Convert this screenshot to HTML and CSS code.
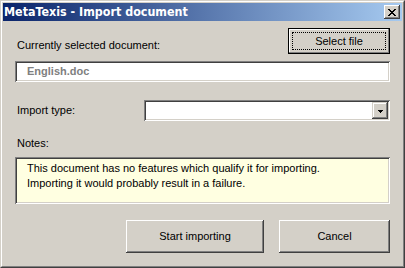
FILE: index.html
```html
<!DOCTYPE html>
<html>
<head>
<meta charset="utf-8">
<link rel="stylesheet" href="styles.css">
</head>
<body>
<div class="window">
  <div class="frame">
    <div class="titlebar">
      <span class="title">MetaTexis - Import document</span>
      <div class="close">
        <svg width="8" height="7" viewBox="0 0 8 7" shape-rendering="crispEdges">
          <path d="M0 0h2v1h-2zM6 0h2v1h-2zM1 1h2v1h-2zM5 1h2v1h-2zM2 2h4v1h-4zM3 3h2v1h-2zM2 4h4v1h-4zM1 5h2v1h-2zM5 5h2v1h-2zM0 6h2v1h-2zM6 6h2v1h-2z" fill="#000"/>
        </svg>
      </div>
    </div>
    <div class="content">
      <div class="row-top">
        <span class="label">Currently selected document:</span>
        <div class="btn btn-default"><span class="focus">Select file</span></div>
      </div>
      <div class="field">English.doc</div>
      <div class="row-combo">
        <span class="label label-fixed">Import type:</span>
        <div class="combo">
          <div class="combo-value"></div>
          <div class="combo-btn">
            <svg width="5" height="3" viewBox="0 0 5 3" shape-rendering="crispEdges"><path d="M0 0h5v1h-5zM1 1h3v1h-3zM2 2h1v1h-1z" fill="#000"/></svg>
          </div>
        </div>
      </div>
      <div class="label notes-label">Notes:</div>
      <div class="notes">This document has no features which qualify it for importing.<br>Importing it would probably result in a failure.</div>
      <div class="actions">
        <div class="btn btn-start">Start importing</div>
        <div class="btn btn-cancel">Cancel</div>
      </div>
    </div>
  </div>
</div>
</body>
</html>
```
FILE: styles.css
```css
html, body {
  margin: 0;
  padding: 0;
  background: #d4d0c8;
}
body {
  font-family: "Liberation Sans", Arial, sans-serif;
  font-size: 11px;
  color: #000;
}
.window {
  width: 405px;
  height: 268px;
  box-sizing: border-box;
  background: #d4d0c8;
  border: 1px solid;
  border-color: #d4d0c8 #404040 #404040 #d4d0c8;
}
.frame {
  height: 100%;
  box-sizing: border-box;
  border: 1px solid;
  border-color: #fff #808080 #808080 #fff;
  padding: 1px;
  display: flex;
  flex-direction: column;
}
.titlebar {
  height: 18px;
  background: linear-gradient(to right, #0a246a, #a6caf0);
  display: flex;
  align-items: center;
  justify-content: space-between;
  padding: 0 1px 0 1px;
}
.title {
  color: #fff;
  font-weight: bold;
  font-size: 12.4px;
  line-height: 18px;
  font-family: "DejaVu Sans Condensed", "DejaVu Sans", sans-serif;
}
.close {
  width: 16px;
  height: 14px;
  box-sizing: border-box;
  background: #d4d0c8;
  box-shadow: inset -1px -1px #404040, inset 1px 1px #fff, inset -2px -2px #808080;
  display: flex;
  align-items: center;
  justify-content: center;
  margin-right: 1px;
}
.close svg { display: block; margin-left: -1px; }
.content {
  flex: 1;
  padding: 7px 12px 0 12px;
  display: flex;
  flex-direction: column;
}
.label {
  line-height: 13px;
  padding-left: 2px;
}
.row-top {
  height: 26px;
  display: flex;
  justify-content: space-between;
  align-items: flex-end;
}
.row-top .label { margin-bottom: 2px; }
.btn {
  box-sizing: border-box;
  background: #d4d0c8;
  box-shadow: inset -1px -1px #404040, inset 1px 1px #fff, inset -2px -2px #808080;
  display: flex;
  align-items: center;
  justify-content: center;
  line-height: 13px;
}
.btn-default {
  width: 102px;
  height: 26px;
  border: 1px solid #000;
  padding: 3px;
  box-shadow: inset -1px -1px #808080, inset 1px 1px #fff;
  align-self: flex-start;
}
.focus {
  flex: 1;
  align-self: stretch;
  border: 1px dotted #000;
  display: flex;
  align-items: center;
  justify-content: center;
}
.field {
  margin-top: 7px;
  height: 21px;
  box-sizing: border-box;
  background: #fff;
  box-shadow: inset 1px 1px #808080, inset -1px -1px #fff, inset 2px 2px #404040, inset -2px -2px #d4d0c8;
  padding-left: 12px;
  line-height: 21px;
  font-weight: bold;
  color: #808080;
}
.row-combo {
  margin-top: 18px;
  height: 21px;
  display: flex;
  align-items: center;
}
.label-fixed {
  width: 127px;
  flex: none;
}
.combo {
  flex: 1;
  height: 21px;
  box-sizing: border-box;
  background: #fff;
  box-shadow: inset 1px 1px #808080, inset -1px -1px #fff, inset 2px 2px #404040, inset -2px -2px #d4d0c8;
  padding: 2px;
  display: flex;
}
.combo-value { flex: 1; }
.combo-btn {
  width: 16px;
  height: 17px;
  box-sizing: border-box;
  background: #d4d0c8;
  box-shadow: inset -1px -1px #404040, inset 1px 1px #d4d0c8, inset -2px -2px #808080, inset 2px 2px #fff;
  display: flex;
  align-items: center;
  justify-content: center;
}
.combo-btn svg { display: block; margin-top: 1px; }
.notes-label {
  margin-top: 16px;
  margin-bottom: 7px;
}
.notes {
  height: 47px;
  box-sizing: border-box;
  background: #ffffe1;
  box-shadow: inset 1px 1px #808080, inset -1px -1px #fff, inset 2px 2px #404040, inset -2px -2px #d4d0c8;
  padding: 4px 10px 0 12px;
  line-height: 15px;
}
.actions {
  margin-top: 16px;
  display: flex;
  justify-content: flex-end;
  gap: 15px;
}
.btn-start { width: 138px; height: 33px; }
.btn-cancel { width: 111px; height: 33px; }
```
